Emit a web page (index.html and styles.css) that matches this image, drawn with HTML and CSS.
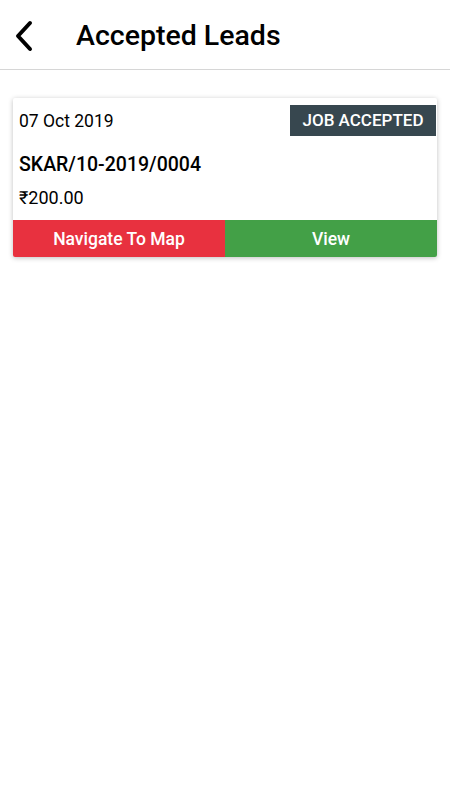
FILE: index.html
```html
<!DOCTYPE html>
<html lang="en">
<head>
    <meta charset="UTF-8">
    <meta name="viewport" content="width=device-width, initial-scale=1.0">
    <title>Accepted Leads</title>
    <link rel="stylesheet" href="styles.css">
</head>
<body>
    <header class="toolbar">
        <button class="back-btn" aria-label="Back">
            <svg width="20" height="32" viewBox="0 0 20 32">
                <path d="M16 3 L4 16 L16 29" fill="none" stroke="#000" stroke-width="4" stroke-linecap="round" stroke-linejoin="round"/>
            </svg>
        </button>
        <h1 class="title">Accepted Leads</h1>
    </header>

    <div class="list">
        <div class="card">
            <div class="card-top">
                <span class="date">07 Oct 2019</span>
                <span class="badge">JOB ACCEPTED</span>
            </div>
            <div class="lead-no">SKAR/10-2019/0004</div>
            <div class="price">₹200.00</div>
            <div class="actions">
                <button class="btn btn-map">Navigate To Map</button>
                <button class="btn btn-view">View</button>
            </div>
        </div>
    </div>
</body>
</html>
```

FILE: styles.css
```css
body {
    font-family: Roboto, "Noto Sans", sans-serif;
    color: #000;
    background: #fff;
    margin: 0;
    padding: 0;
}

.toolbar {
    height: 69px;
    display: flex;
    align-items: center;
    border-bottom: 1px solid #d6d6d6;
}

.back-btn {
    background: none;
    border: none;
    padding: 0;
    margin: 2px 0 0 14px;
    width: 22px;
    height: 32px;
    display: flex;
    align-items: center;
    cursor: pointer;
}

.title {
    margin: 3px 0 0 40px;
    font-size: 28.5px;
    font-weight: 500;
    line-height: 32px;
}

.list {
    padding: 28px 13px;
}

.card {
    background: #fff;
    border-radius: 2px;
    box-shadow: 0 1px 5px rgba(0, 0, 0, 0.25);
    overflow: hidden;
}

.card-top {
    display: flex;
    justify-content: space-between;
    align-items: center;
    padding: 7px 0 0 6px;
}

.date {
    font-size: 17.5px;
}

.badge {
    background: #37474f;
    color: #fff;
    font-size: 17px;
    font-weight: 500;
    height: 31px;
    line-height: 31px;
    width: 146px;
    text-align: center;
    margin-right: 1px;
}

.lead-no {
    padding-left: 6px;
    margin-top: 17px;
    font-size: 19.5px;
    font-weight: 500;
    line-height: 24px;
}

.price {
    padding-left: 6px;
    margin-top: 10px;
    font-size: 18px;
    line-height: 22px;
}

.actions {
    display: flex;
    margin-top: 11px;
}

.btn {
    flex: 1;
    height: 37px;
    border: none;
    color: #fff;
    font-family: inherit;
    font-size: 17.5px;
    font-weight: 500;
    cursor: pointer;
}

.btn-map {
    background: #e8313f;
}

.btn-view {
    background: #43a047;
}
```
